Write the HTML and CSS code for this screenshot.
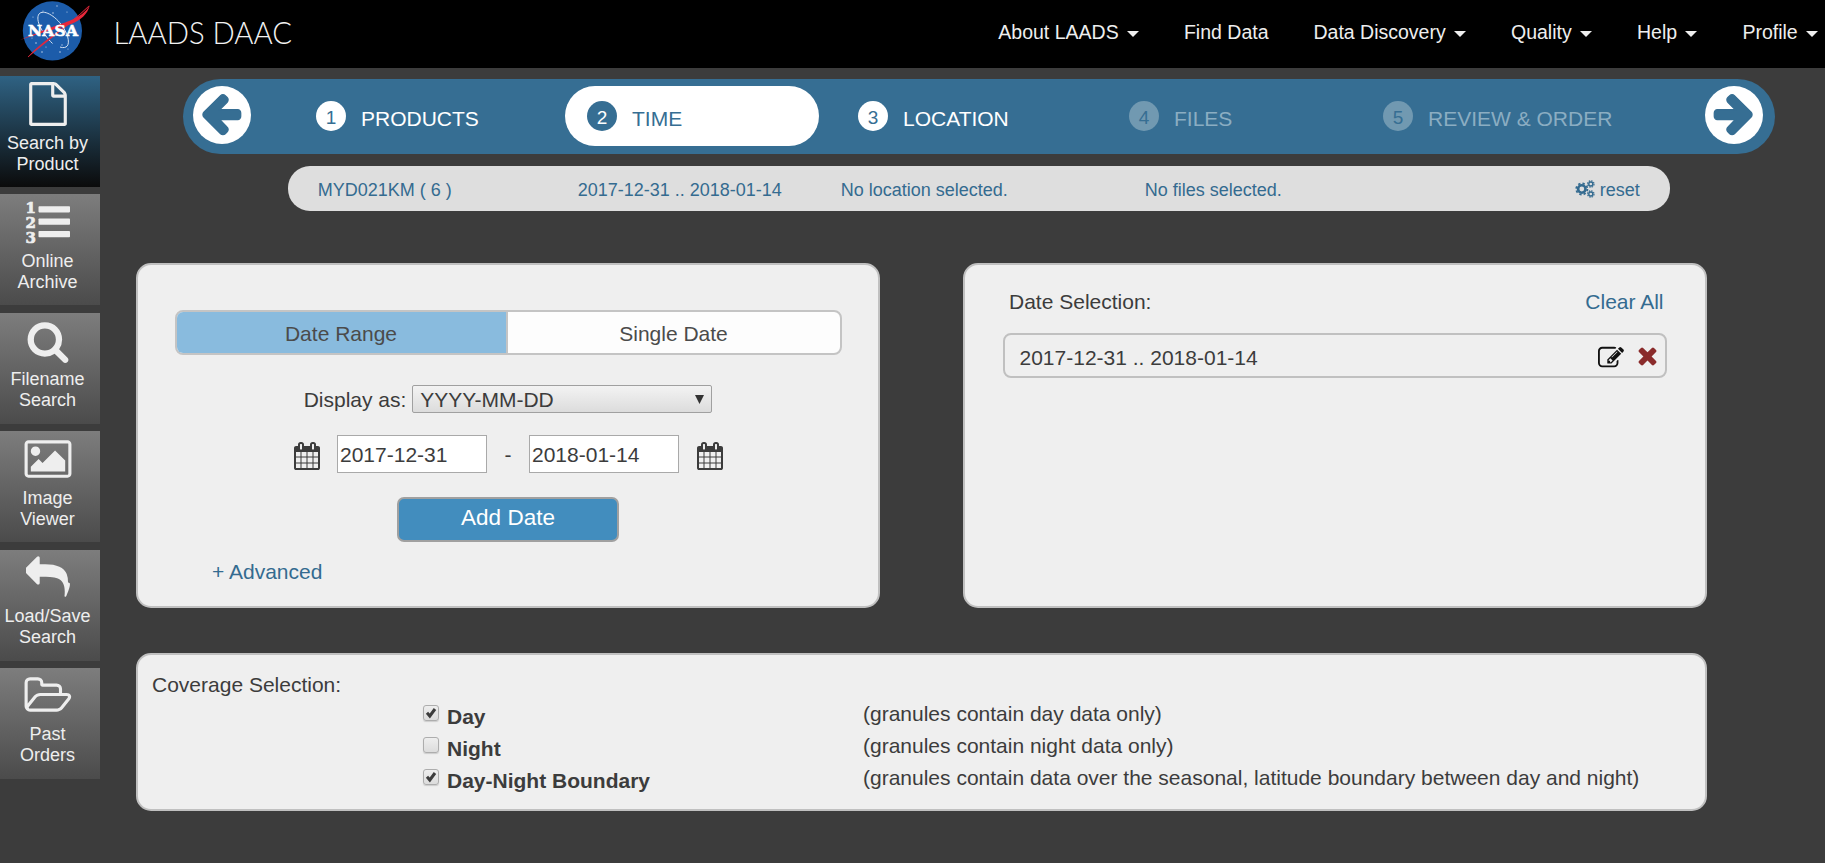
FILE: index.html
```html
<!DOCTYPE html>
<html lang="en">
<head>
<meta charset="utf-8">
<title>LAADS DAAC</title>
<link rel="stylesheet" href="styles.css">
</head>
<body>
<svg class="defs" width="0" height="0">
  <symbol id="i-arrow" viewBox="0 0 1792 1792"><path d="M1664 896v128q0 53-32.500 90.500t-84.500 37.500h-704l293 294q38 36 38 90t-38 90l-75 76q-37 37-90 37-52 0-91-37l-651-652q-37-37-37-90 0-52 37-91l651-650q38-38 91-38 52 0 90 38l75 74q38 38 38 91t-38 91l-293 293h704q52 0 84.500 37.500t32.500 90.500z"/></symbol>
  <symbol id="i-cal" viewBox="0 0 1792 1792"><path d="M192 1664h288v-288h-288v288zm352 0h320v-288h-320v288zm-352-352h288v-320h-288v320zm352 0h320v-320h-320v320zm-352-384h288v-288h-288v288zm736 736h320v-288h-320v288zm-384-736h320v-288h-320v288zm768 736h288v-288h-288v288zm-384-352h320v-320h-320v320zm-352-864v-288q0-13-9.500-22.500t-22.500-9.500h-64q-13 0-22.500 9.500t-9.500 22.500v288q0 13 9.500 22.500t22.500 9.500h64q13 0 22.500-9.500t9.500-22.500zm736 864h288v-320h-288v320zm-384-384h320v-288h-320v288zm384 0h288v-288h-288v288zm32-480v-288q0-13-9.500-22.500t-22.500-9.500h-64q-13 0-22.500 9.500t-9.500 22.500v288q0 13 9.500 22.500t22.500 9.500h64q13 0 22.500-9.500t9.500-22.500zm384-64v1280q0 52-38 90t-90 38h-1408q-52 0-90-38t-38-90v-1280q0-52 38-90t90-38h128v-96q0-66 47-113t113-47h64q66 0 113 47t47 113v96h384v-96q0-66 47-113t113-47h64q66 0 113 47t47 113v96h128q52 0 90 38t38 90z"/></symbol>
  <symbol id="i-check" viewBox="0 0 16 16"><path d="M4 7.800 6.800 11 12 4" fill="none" stroke="#3c3c3c" stroke-width="3"/></symbol>
</svg>

<header class="topbar">
  <svg class="logo" width="80" height="68" viewBox="0 0 80 68">
    <circle cx="37.400" cy="30.800" r="29.600" fill="#1c5caa"/>
    <g fill="#b9cde8"><circle cx="42" cy="6" r=".7"/><circle cx="28" cy="11" r=".6"/><circle cx="38" cy="13" r=".8"/><circle cx="18" cy="17" r=".6"/><circle cx="52" cy="12" r=".6"/><circle cx="21" cy="43" r=".8"/><circle cx="27" cy="52" r=".8"/><circle cx="31" cy="47" r=".6"/><circle cx="47" cy="45" r=".7"/><circle cx="45" cy="52" r=".8"/><circle cx="53" cy="49" r=".6"/><circle cx="17" cy="38" r=".6"/></g>
    <path d="M37.500 43.500C27 33 20 20 24 14C28 9 40 15 48 27C54 36 55 45 51 47C49 48 46 47.500 45 47" fill="none" stroke="#d5e2f2" stroke-width="1"/>
    <path d="M5 40C26 31 40 26 54 21C64 17 71 12 75 5C72 15 66 20 56 24C49 27 43 28 37 30C26 33 16 36 5 40Z" fill="#e8273a"/>
    <path d="M74 6C52 27 33 40 13 57C26 42 52 27 74 6Z" fill="#e8273a" stroke="#e8273a" stroke-width=".6"/>
    <text x="13" y="36.300" textLength="50" lengthAdjust="spacing" class="logo-word">NASA</text>
  </svg>
  <svg class="brand" width="220" height="68" viewBox="0 0 220 68"><text x="18.500" y="44" textLength="178.500" lengthAdjust="spacingAndGlyphs">LAADS DAAC</text></svg>
  <nav class="nav">
    <a>About LAADS<i class="caret"></i></a>
    <a>Find Data</a>
    <a>Data Discovery<i class="caret"></i></a>
    <a>Quality<i class="caret"></i></a>
    <a>Help<i class="caret"></i></a>
    <a>Profile<i class="caret"></i></a>
  </nav>
</header>

<div class="page">
  <aside class="side">
    <a class="tile on"><svg width="44" height="44" viewBox="0 0 1792 1792"><path d="M1596 380q28 28 48 76t20 88v1152q0 40-28 68t-68 28h-1344q-40 0-68-28t-28-68v-1600q0-40 28-68t68-28h896q40 0 88 20t76 48zm-444-244v376h376q-10-29-22-41l-313-313q-12-12-41-22zm384 1528v-1024h-416q-40 0-68-28t-28-68v-416h-768v1536h1280z"/></svg><span>Search by<br>Product</span></a>
    <a class="tile"><svg class="list" width="44" height="44" viewBox="0 0 44 44"><g class="digits"><text x="4.800" y="12.600" text-anchor="middle">1</text><text x="4.800" y="27.800" text-anchor="middle">2</text><text x="4.800" y="43" text-anchor="middle">3</text></g><rect x="12.500" y="6.200" width="31.500" height="6.200" rx=".8"/><rect x="12.500" y="18.500" width="31.500" height="6.200" rx=".8"/><rect x="12.500" y="31" width="31.500" height="6.200" rx=".8"/></svg><span>Online<br>Archive</span></a>
    <a class="tile"><svg width="44" height="44" viewBox="0 0 1792 1792"><path d="M1216 832q0-185-131.500-316.500t-316.500-131.500-316.500 131.500-131.500 316.500 131.500 316.500 316.500 131.500 316.500-131.500 131.500-316.500zm512 832q0 52-38 90t-90 38q-54 0-90-38l-343-342q-179 124-399 124-143 0-273.500-55.500t-225-150-150-225-55.500-273.500 55.500-273.500 150-225 225-150 273.500-55.500 273.500 55.500 225 150 150 225 55.500 273.500q0 220-124 399l343 343q37 37 37 90z"/></svg><span>Filename<br>Search</span></a>
    <a class="tile"><svg width="50" height="44" viewBox="0 0 2048 1792"><path d="M704 576q0 80-56 136t-136 56-136-56-56-136 56-136 136-56 136 56 56 136zm1024 384v448h-1408v-192l320-320 160 160 512-512zm96-704h-1600q-13 0-22.500 9.500t-9.500 22.500v1216q0 13 9.500 22.500t22.500 9.500h1600q13 0 22.500-9.500t9.500-22.500v-1216q0-13-9.500-22.500t-22.500-9.500zm160 32v1216q0 66-47 113t-113 47h-1600q-66 0-113-47t-47-113v-1216q0-66 47-113t113-47h1600q66 0 113 47t47 113z"/></svg><span>Image<br>Viewer</span></a>
    <a class="tile"><svg width="44" height="44" viewBox="0 0 1792 1792"><path d="M1792 1120q0 166-127 451-3 7-10.500 24t-13.500 30-13 22q-12 17-28 17-15 0-23.500-10t-8.500-25q0-9 2.500-26.500t2.500-23.500q5-68 5-123 0-112-19.500-200.500t-54-153.500-89-112-117-74.500-146.500-42.500-171.500-22-197.500-6h-224v256q0 26-19 45t-45 19-45-19l-512-512q-19-19-19-45t19-45l512-512q19-19 45-19t45 19 19 45v256h224q713 0 875 403 53 134 53 333z"/></svg><span>Load/Save<br>Search</span></a>
    <a class="tile"><svg width="50" height="44" viewBox="0 0 2048 1792"><path d="M1845 931q0-35-53-35h-1088q-40 0-85.500 21.500t-71.500 52.500l-294 363q-18 24-18 40 0 35 53 35h1088q40 0 86-22t71-53l294-363q18-22 18-39zm-1141-163h768v-160q0-40-28-68t-68-28h-576q-40 0-68-28t-28-68v-64q0-40-28-68t-68-28h-320q-40 0-68 28t-28 68v853l256-315q44-53 116-87.500t140-34.500zm1269 163q0 62-46 120l-295 363q-43 53-116 87.500t-140 34.500h-1088q-92 0-158-66t-66-158v-960q0-92 66-158t158-66h320q92 0 158 66t66 158v32h544q92 0 158 66t66 158v160h192q54 0 99 24.500t67 70.500q15 32 15 68z"/></svg><span>Past<br>Orders</span></a>
  </aside>

  <main class="main">
    <div class="steps">
      <button class="go"><svg width="46" height="46"><use href="#i-arrow"/></svg></button>
      <ol class="step-list">
        <li class="step"><b>1</b><span>PRODUCTS</span></li>
        <li class="step current"><b>2</b><span>TIME</span></li>
        <li class="step"><b>3</b><span>LOCATION</span></li>
        <li class="step off"><b>4</b><span>FILES</span></li>
        <li class="step off last"><b>5</b><span>REVIEW &amp; ORDER</span></li>
      </ol>
      <button class="go next"><svg width="46" height="46"><use href="#i-arrow"/></svg></button>
    </div>

    <div class="summary">
      <span>MYD021KM ( 6 )</span>
      <span>2017-12-31 .. 2018-01-14</span>
      <span>No location selected.</span>
      <span>No files selected.</span>
      <span class="reset"><svg width="20" height="18" viewBox="0 0 20 18" fill="none" stroke="#346b90"><circle cx="6.800" cy="9" r="3.700" stroke-width="2.600"/><circle cx="6.800" cy="9" r="5.600" stroke-width="1.800" stroke-dasharray="2.300 2.100"/><circle cx="15.800" cy="4" r="2" stroke-width="1.400"/><circle cx="15.800" cy="4" r="3.200" stroke-width="1.200" stroke-dasharray="1.500 1.010"/><circle cx="15.800" cy="14" r="2" stroke-width="1.400"/><circle cx="15.800" cy="14" r="3.200" stroke-width="1.200" stroke-dasharray="1.500 1.010"/></svg>reset</span>
    </div>

    <div class="panels">
      <section class="panel picker">
        <div class="tabs"><a class="tab on">Date Range</a><a class="tab">Single Date</a></div>
        <div class="format"><label>Display as:</label><div class="select"><span>YYYY-MM-DD</span><svg width="9" height="9" viewBox="0 0 9 9"><path d="M0 0h9L4.500 9z"/></svg></div></div>
        <div class="range">
          <svg class="cal" width="28" height="28"><use href="#i-cal"/></svg>
          <input class="date" value="2017-12-31">
          <span class="dash">-</span>
          <input class="date" value="2018-01-14">
          <svg class="cal end" width="28" height="28"><use href="#i-cal"/></svg>
        </div>
        <button class="add">Add Date</button>
        <a class="advanced">+ Advanced</a>
      </section>
      <section class="panel chosen">
        <div class="chosen-head"><span>Date Selection:</span><a>Clear All</a></div>
        <div class="chosen-row"><span>2017-12-31 .. 2018-01-14</span>
          <svg class="edit" width="26" height="26" viewBox="0 0 1792 1792"><path d="M888 1184l116-116-152-152-116 116v56h96v96h56zm440-720q-16-16-33 1l-350 350q-17 17-1 33t33-1l350-350q17-17 1-33zm80 594v190q0 119-84.500 203.500t-203.500 84.500h-832q-119 0-203.500-84.500t-84.500-203.500v-832q0-119 84.500-203.500t203.500-84.500h832q63 0 117 25 15 7 18 23 3 17-9 29l-49 49q-14 14-32 8-23-6-45-6h-832q-66 0-113 47t-47 113v832q0 66 47 113t113 47h832q66 0 113-47t47-113v-126q0-13 9-22l64-64q15-15 35-7t20 29zm-96-738l288 288-672 672h-288v-288zm444 132l-92 92-288-288 92-92q28-28 68-28t68 28l152 152q28 28 28 68t-28 68z"/></svg>
          <svg class="remove" width="27" height="27" viewBox="0 0 1792 1792"><path d="M1490 1322q0 40-28 68l-136 136q-28 28-68 28t-68-28l-294-294-294 294q-28 28-68 28t-68-28l-136-136q-28-28-28-68t28-68l294-294-294-294q-28-28-28-68t28-68l136-136q28-28 68-28t68 28l294 294 294-294q28-28 68-28t68 28l136 136q28 28 28 68t-28 68l-294 294 294 294q28 28 28 68z"/></svg>
        </div>
      </section>
    </div>

    <section class="panel coverage">
      <div class="coverage-title">Coverage Selection:</div>
      <div class="row"><span class="box"><svg width="16" height="16"><use href="#i-check"/></svg></span><b>Day</b><span>(granules contain day data only)</span></div>
      <div class="row"><span class="box"></span><b>Night</b><span>(granules contain night data only)</span></div>
      <div class="row"><span class="box"><svg width="16" height="16"><use href="#i-check"/></svg></span><b>Day-Night Boundary</b><span>(granules contain data over the seasonal, latitude boundary between day and night)</span></div>
    </section>
  </main>
</div>
</body>
</html>
```
FILE: styles.css
```css
* { box-sizing: border-box; }
body {
  margin: 0;
  height: 863px;
  overflow: hidden;
  background: #3c3c3c;
  color: #3c3c3c;
  font: 21px/24px "Liberation Sans", Arial, sans-serif;
}
svg { display: block; flex: none; }
.defs { position: absolute; }
button, input { font: inherit; margin: 0; }

/* Top bar */
.topbar { display: flex; height: 68px; background: #000; padding-left: 15px; }
.logo-word { font: bold 15.500px "DejaVu Serif", serif; fill: #fff; stroke: #fff; stroke-width: .5px; }
.brand { fill: #f2f2f2; font: 300 32px Lato, sans-serif; }
.nav { display: flex; margin-left: auto; padding: 20px 7px 0 0; gap: 45px; color: #eee; font-size: 19.5px; white-space: nowrap; }
.nav a { display: flex; }
.caret { margin: 11px 0 0 8.300px; width: 12px; height: 6px; border: 6px solid transparent; border-top-color: #eee; border-bottom: 0; }

.page { display: flex; }

/* Sidebar */
.side { width: 100px; padding-top: 8px; display: flex; flex-direction: column; gap: 7.400px; flex: none; }
.tile { height: 111px; padding: 6px 5px 0 0; display: flex; flex-direction: column; align-items: center; gap: 6.500px; background: linear-gradient(#7d7d7d, #4b4b4b); color: #eee; fill: #eee; font-size: 18px; line-height: 21px; text-align: center; }
.tile.on { background: linear-gradient(#2f6283, #0b0b0b); }
.list { overflow: visible; }
.digits { font: bold 15px/16px "DejaVu Serif", serif; stroke: #eee; stroke-width: .7px; }

.main { flex: 1; }

/* Wizard steps */
.steps { display: flex; width: 1592px; height: 75px; margin: 11px 0 0 83px; padding: 7px 12px 0 10px; border-radius: 38px; background: #366e93; }
.go { display: flex; align-items: flex-start; justify-content: flex-start; width: 58px; height: 58px; border: 0; border-radius: 50%; padding: 4px 0 0 5px; background: #fff; fill: #366e93; stroke: #366e93; stroke-width: 50px; }
.go.next { padding-left: 6px; }
.next svg { transform: scaleX(-1); }
.step-list { flex: 1; display: flex; gap: 17px; margin: 0; padding: 0 0 0 43px; list-style: none; color: #fff; }
.step { width: 254px; height: 60px; border-radius: 30px; padding: 15px 0 0 22px; display: flex; gap: 15px; flex: none; white-space: nowrap; }
.step b { width: 30px; height: 30px; border-radius: 50%; background: #fff; color: #366e93; font-weight: 400; font-size: 19px; line-height: 34px; text-align: center; }
.step span { padding-top: 6px; }
.step.current { background: #fff; color: #366e93; }
.step.current b { background: #366e93; color: #fff; }
.step.off { color: #8badc2; }
.step.off b { background: #7199b1; }
.step.last { margin-left: -17px; }

/* Current choices */
.summary { display: grid; grid-template-columns: 260px 263px 304px 430px auto; width: 1382px; height: 45px; margin: 12px 0 0 188px; padding-left: 29.700px; border-radius: 22px; background: #dedede; color: #346b90; font-size: 18px; line-height: 48px; }
.reset { display: flex; align-items: center; gap: 5px; height: 48px; }
.reset svg { margin-top: -2px; }

/* Panels */
.panel { background: #efefef; border: 2px solid #c0c0c0; border-radius: 15px; }
.panels { display: flex; gap: 83px; margin: 52px 0 0 36px; }
.panels .panel { width: 744px; height: 345px; }
.picker { display: flex; flex-direction: column; align-items: center; padding: 45px 0 0; }
.tabs { display: flex; width: 667px; height: 45px; border: 2px solid #c4c4c4; border-radius: 8px; background: #fdfdfd; overflow: hidden; line-height: 43px; text-align: center; color: #4b4b4b; }
.tab { flex: 1; }
.tab.on { flex: 0 0 331px; background: #89bbde; border-right: 2px solid #c4c4c4; }
.format { display: flex; gap: 6px; margin-top: 29.500px; line-height: 29px; }
.select { display: flex; justify-content: space-between; width: 300px; height: 28px; padding: 0 7px; border: 1px solid #a0a0a0; border-radius: 2px; background: linear-gradient(#f3f3f3, #dcdcdc); }
.select span { margin-top: -1px; }
.select svg { margin-top: 9px; fill: #333; }
.range { display: flex; margin-top: 21.500px; }
.date { width: 150px; height: 38px; border: 1px solid #a9a9a9; background: #fff; color: #3c3c3c; padding: 2px 2px 0; }
.cal { margin: 7px 16px 0; fill: #3c3c3c; }
.cal.end { margin: 7px 15px 0 17px; }
.dash { width: 42px; text-align: center; line-height: 40px; }
.add { width: 222px; height: 45px; margin-top: 22px; padding: 0 0 3px; border: 2px solid #a0a0a0; border-radius: 7px; background: #428dbe; color: #fff; font-size: 22.500px; }
.advanced { align-self: flex-start; margin: 18px 0 0 74px; color: #346b90; }
.chosen { padding: 25px 38px 0; }
.chosen-head { display: flex; justify-content: space-between; margin: 0 3.500px 0 6px; }
.chosen-head a { color: #346b90; }
.chosen-row { display: flex; height: 45px; margin-top: 19px; padding: 0 4px 0 14.500px; border: 2px solid #c0c0c0; border-radius: 8px; line-height: 45px; }
.edit { margin: 10px 10px 0 auto; fill: #111; }
.remove { margin-top: 7px; fill: #8a2b2b; }

/* Coverage */
.coverage { width: 1571px; height: 158px; margin: 45px 0 0 36px; padding: 18px 0 0 14px; }
.row { display: grid; grid-template-columns: 24px 416px 1fr; height: 32px; margin-left: 271px; line-height: 24px; }
.coverage-title { height: 28px; }
.row b { padding-top: 4px; }
.row > span:last-child { padding-top: 1px; }
.box { width: 16px; height: 16px; margin-top: 4px; border: 1px solid #adadad; border-radius: 3px; background: linear-gradient(#eee, #dcdcdc); box-shadow: 0 1px 1px #ccc; }
.box svg { margin: -1px; }
```
